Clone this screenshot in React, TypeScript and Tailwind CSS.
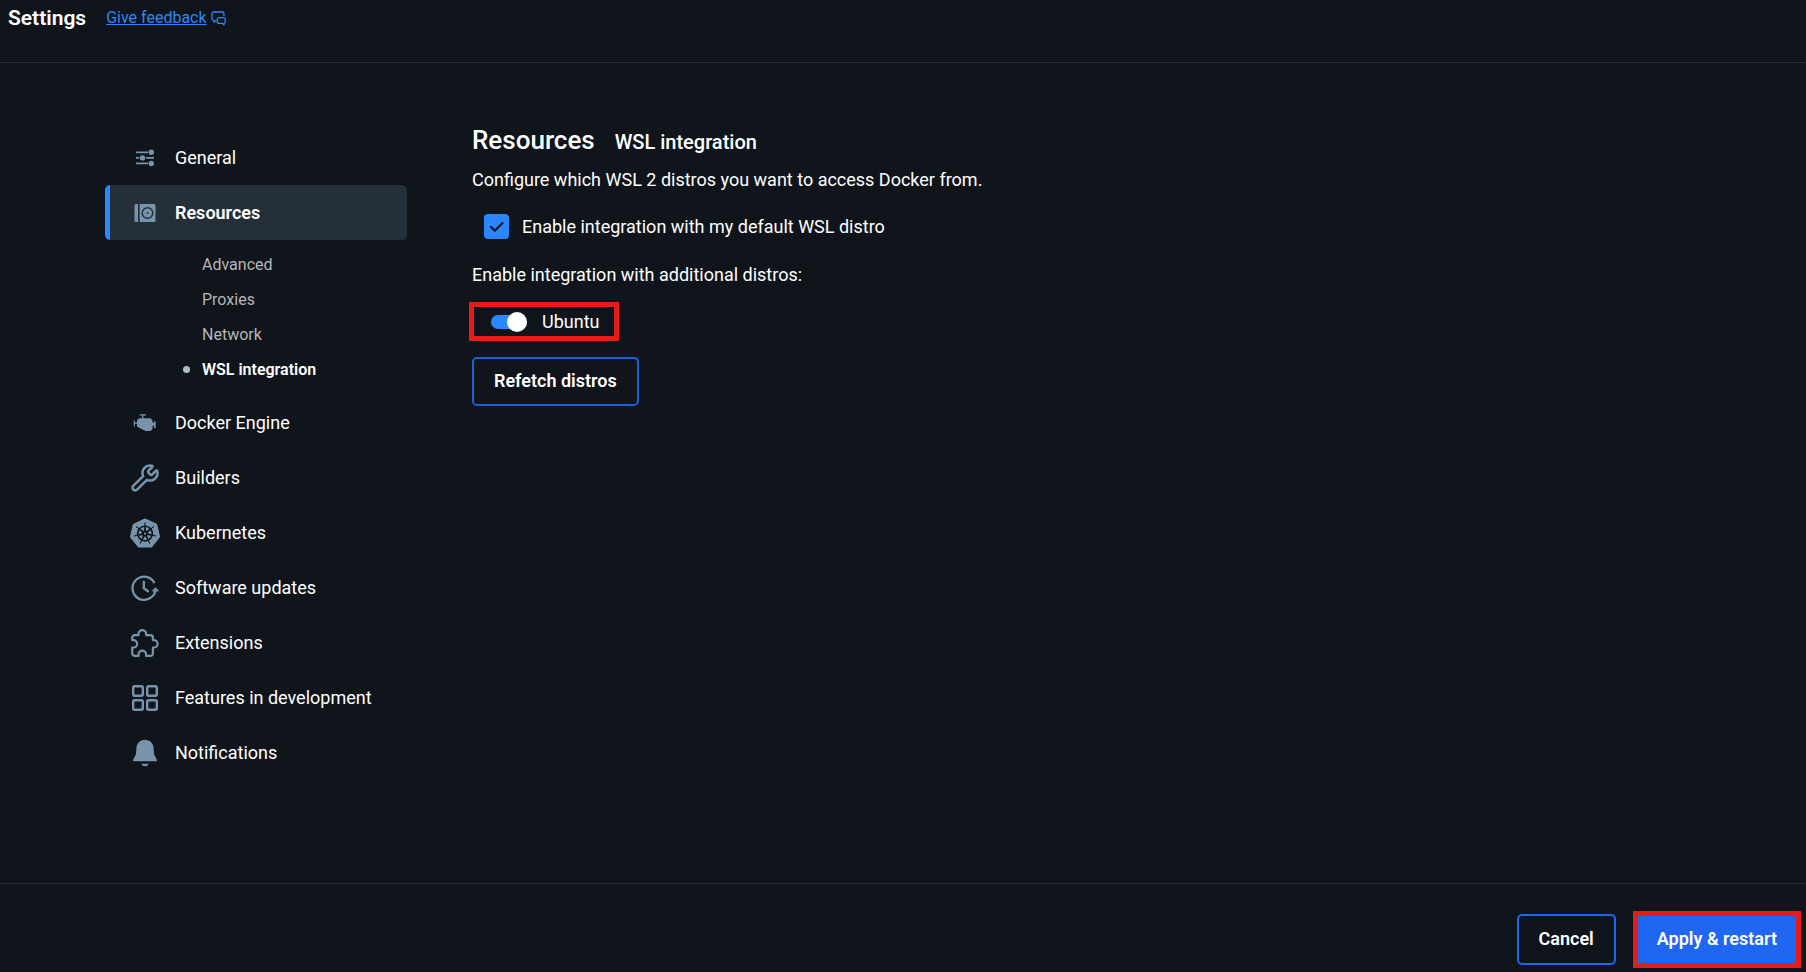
import React from "react";
import { Wrench } from "lucide-react";
import { SiKubernetes } from "react-icons/si";

const iconColor = "text-[#7794ab]";

function GeneralIcon() {
  return (
    <svg width="20" height="18" viewBox="0 0 20 18" fill="currentColor" aria-hidden="true">
      <path d="M1 2.500h12v1.800H1zM1 8h3v1.800H1zM11 8h8v1.800h-8zM1 13.500h12v1.800H1z" />
      <circle cx="16.300" cy="3.300" r="2.700" />
      <circle cx="7.500" cy="8.900" r="2.700" />
      <circle cx="16.300" cy="14.500" r="2.700" />
    </svg>
  );
}

function ResourcesIcon() {
  return (
    <svg width="22" height="18" viewBox="0 0 22 18" aria-hidden="true">
      <path d="M2 0h2v18H2a1.500 1.500 0 0 1-1.500-1.500v-15A1.500 1.500 0 0 1 2 0zM5.700 0H20a1.500 1.500 0 0 1 1.500 1.500v15A1.500 1.500 0 0 1 20 18H5.700z" fill="currentColor" />
      <circle cx="13.500" cy="9" r="5.300" fill="none" stroke="#242f3a" strokeWidth="1.500" />
      <circle cx="13.500" cy="9" r="1" fill="#242f3a" />
    </svg>
  );
}

function EngineIcon() {
  return (
    <svg width="24" height="18" viewBox="0 0 24 18" fill="currentColor" aria-hidden="true">
      <path d="M6.500 .3h6.500v1.100h-2.600V4.300H17.500l2 2v2.500h1.500V7.600h1.700V14H21v-2.300h-1.500V15l-2 2h-5L7 14.200 4 12.500V9.700H1.900V12.500H.7V6.500h1.200v2h2.100V6.300l2-2h3.100V1.400H6.500z" />
    </svg>
  );
}

function UpdatesIcon() {
  return (
    <svg width="28" height="26" viewBox="0 0 28 26" fill="none" stroke="currentColor" strokeWidth="2.300" strokeLinecap="round" strokeLinejoin="round" aria-hidden="true">
      <path d="M23 7.200A11.600 11.600 0 1 0 20.500 22.200Q23.800 19.600 24.500 16" />
      <path d="M12.800 7v6.300l4.200 3" />
      <path d="M21.600 15.700l3-3 2.600 3z" fill="currentColor" strokeWidth="1" />
    </svg>
  );
}

function ExtensionsIcon() {
  return (
    <svg width="28" height="28" viewBox="0 0 28 28" fill="none" stroke="currentColor" strokeWidth="2.200" strokeLinejoin="round" aria-hidden="true">
      <path d="M7.500 6.200V5a3.800 3.800 0 0 1 7.600 0v1.200h4.200a2.600 2.600 0 0 1 2.600 2.600v2.300h1a3.700 3.700 0 0 1 0 7.400h-1v5.800a2.600 2.600 0 0 1-2.600 2.600h-4.200v-1.500a3.800 3.800 0 0 0-7.600 0v1.500H3.800a2.600 2.600 0 0 1-2.600-2.600v-5.800h1.300a3.700 3.700 0 0 0 0-7.400H1.200V8.800a2.600 2.600 0 0 1 2.600-2.600z" />
    </svg>
  );
}

function FeaturesIcon() {
  return (
    <svg width="26" height="26" viewBox="0 0 26 26" fill="none" stroke="currentColor" strokeWidth="2.400" aria-hidden="true">
      <rect x="1.200" y="1.200" width="9.600" height="9.600" rx="1.500" />
      <rect x="15.200" y="1.200" width="9.600" height="9.600" rx="1.500" />
      <rect x="1.200" y="15.200" width="9.600" height="9.600" rx="1.500" />
      <rect x="15.200" y="15.200" width="9.600" height="9.600" rx="1.500" />
    </svg>
  );
}

function BellIcon() {
  return (
    <svg width="26" height="28" viewBox="0 0 26 28" fill="currentColor" aria-hidden="true">
      <path d="M13 .7c5 0 8.300 3.500 8.600 8.500l.5 6.300 2.900 5.500a.8.8 0 0 1-.7 1.200H1.700A.8.800 0 0 1 1 21l2.900-5.500.5-6.300C4.700 4.200 8 .7 13 .7zM9.200 24.800h7.600q-.8 2.500-3.800 2.500t-3.800-2.500z" />
    </svg>
  );
}

function FeedbackIcon() {
  return (
    <svg width="15" height="15" viewBox="0 0 15 15" fill="none" stroke="currentColor" strokeWidth="1.300" strokeLinejoin="round" aria-hidden="true">
      <path d="M5.500 9.800H4.500L3 11.300V9.600Q1 9.300 1 7.500V3q0-2 2-2h8q2 0 2 2v2" />
      <path d="M8 6.700h4.500q1.700 0 1.700 1.700v2.300q0 1.400-1.200 1.700v1.600l-1.700-1.600H8q-1.700 0-1.700-1.700V8.400Q6.300 6.700 8 6.700z" />
    </svg>
  );
}

const before = [
  { label: "General", icon: <GeneralIcon />, active: false },
  { label: "Resources", icon: <ResourcesIcon />, active: true },
];
const subItems = ["Advanced", "Proxies", "Network", "WSL integration"];
const after = [
  { label: "Docker Engine", icon: <EngineIcon />, active: false },
  { label: "Builders", icon: <Wrench size={30} strokeWidth={2} />, active: false },
  { label: "Kubernetes", icon: <SiKubernetes size={30} />, active: false },
  { label: "Software updates", icon: <UpdatesIcon />, active: false },
  { label: "Extensions", icon: <ExtensionsIcon />, active: false },
  { label: "Features in development", icon: <FeaturesIcon />, active: false },
  { label: "Notifications", icon: <BellIcon />, active: false },
];

function NavItem({ label, icon, active }: { label: string; icon: React.ReactNode; active: boolean }) {
  return (
    <li>
      <a
        href="#"
        className={
          active
            ? "flex h-[55px] items-center rounded-[5px] border-l-[5px] border-[#2b87ff] bg-[#242f3a] pl-[19px] font-semibold"
            : "flex h-[55px] items-center border-l-[5px] border-transparent pl-[19px]"
        }
      >
        <span className={`flex w-8 justify-center ${iconColor}`}>{icon}</span>
        <span className="ml-[14px]">{label}</span>
      </a>
    </li>
  );
}

export default function App() {
  return (
    <div className="flex min-h-screen flex-col bg-[#10151b] font-[Roboto,sans-serif] text-[18px] leading-6 text-white">
      <header className="flex h-[63px] items-start gap-5 border-b border-[#27292c] px-2 pt-[6px]">
        <h1 className="text-[21px] font-semibold">Settings</h1>
        <a href="#" className="flex items-center gap-1 text-[16px] text-[#2b87ff]">
          <span className="underline">Give feedback</span>
          <FeedbackIcon />
        </a>
      </header>

      <div className="flex grow items-start gap-[65px] pt-[67px] pl-[105px]">
        <nav aria-label="Settings" className="w-[302px] shrink-0">
          <ul>
            {before.map((item) => (
              <NavItem key={item.label} {...item} />
            ))}
            <li>
              <ul className="pt-[7px] pb-2 text-[16px]">
                {subItems.map((label) => {
                  const current = label === "WSL integration";
                  return (
                    <li key={label}>
                      <a
                        href="#"
                        className={
                          current
                            ? "flex h-[35px] items-center gap-3 pl-[78px] font-semibold"
                            : "flex h-[35px] items-center gap-3 pl-[78px] text-[#b5b7b9]"
                        }
                      >
                        <span className={current ? "size-[7px] rounded-full bg-[#adbecb]" : "size-[7px]"} />
                        {label}
                      </a>
                    </li>
                  );
                })}
              </ul>
            </li>
            {after.map((item) => (
              <NavItem key={item.label} {...item} />
            ))}
          </ul>
        </nav>

        <main className="-mt-[6px] flex flex-col items-start">
          <div className="flex items-baseline gap-5">
            <h2 className="text-[26px] leading-8 font-medium">Resources</h2>
            <h3 className="text-[20px] font-medium">WSL integration</h3>
          </div>
          <p className="mt-3">Configure which WSL 2 distros you want to access Docker from.</p>
          <label className="mt-[22px] ml-3 flex items-center gap-[13px]">
            <span className="grid size-[25px]">
              <input type="checkbox" defaultChecked className="col-start-1 row-start-1 size-[25px] appearance-none rounded-[4px] bg-[#2b87ff]" />
              <svg
                className="pointer-events-none col-start-1 row-start-1"
                width="25"
                height="25"
                viewBox="0 0 25 25"
                fill="none"
                stroke="#10151b"
                strokeWidth="2.200"
                strokeLinecap="round"
                strokeLinejoin="round"
                aria-hidden="true"
              >
                <path d="M6.800 12.800l4 4L18.500 9" />
              </svg>
            </span>
            Enable integration with my default WSL distro
          </label>
          <p className="mt-6">Enable integration with additional distros:</p>
          <div className="mt-[15px] -ml-[3px] flex h-[39px] items-center border-[5px] border-[#e81b1b] pr-[15px] pl-[17px]">
            <label className="flex items-center gap-[15px]">
              <span className="grid items-center">
                <input type="checkbox" role="switch" defaultChecked className="col-start-1 row-start-1 h-[14px] w-9 appearance-none rounded-full bg-[#2b87ff]" />
                <span className="pointer-events-none col-start-1 row-start-1 size-5 justify-self-end rounded-full bg-white" />
              </span>
              Ubuntu
            </label>
          </div>
          <button type="button" className="mt-4 h-[49px] rounded-[5px] border-2 border-[#1d5edb] px-5 pb-[2px] font-semibold">
            Refetch distros
          </button>
        </main>
      </div>

      <footer className="flex h-[89px] items-start justify-end gap-[17px] border-t border-[#27292c] pt-[27px] pr-[5px]">
        <button type="button" className="mt-[3px] h-[51px] rounded-[5px] border-2 border-[#1f66f0] px-5 pb-[2px] font-semibold">
          Cancel
        </button>
        <button type="button" className="h-[57px] border-[5px] border-[#e81b1b] bg-[#1f66f0] px-[19px] pb-[2px] font-semibold">
          Apply &amp; restart
        </button>
      </footer>
    </div>
  );
}
